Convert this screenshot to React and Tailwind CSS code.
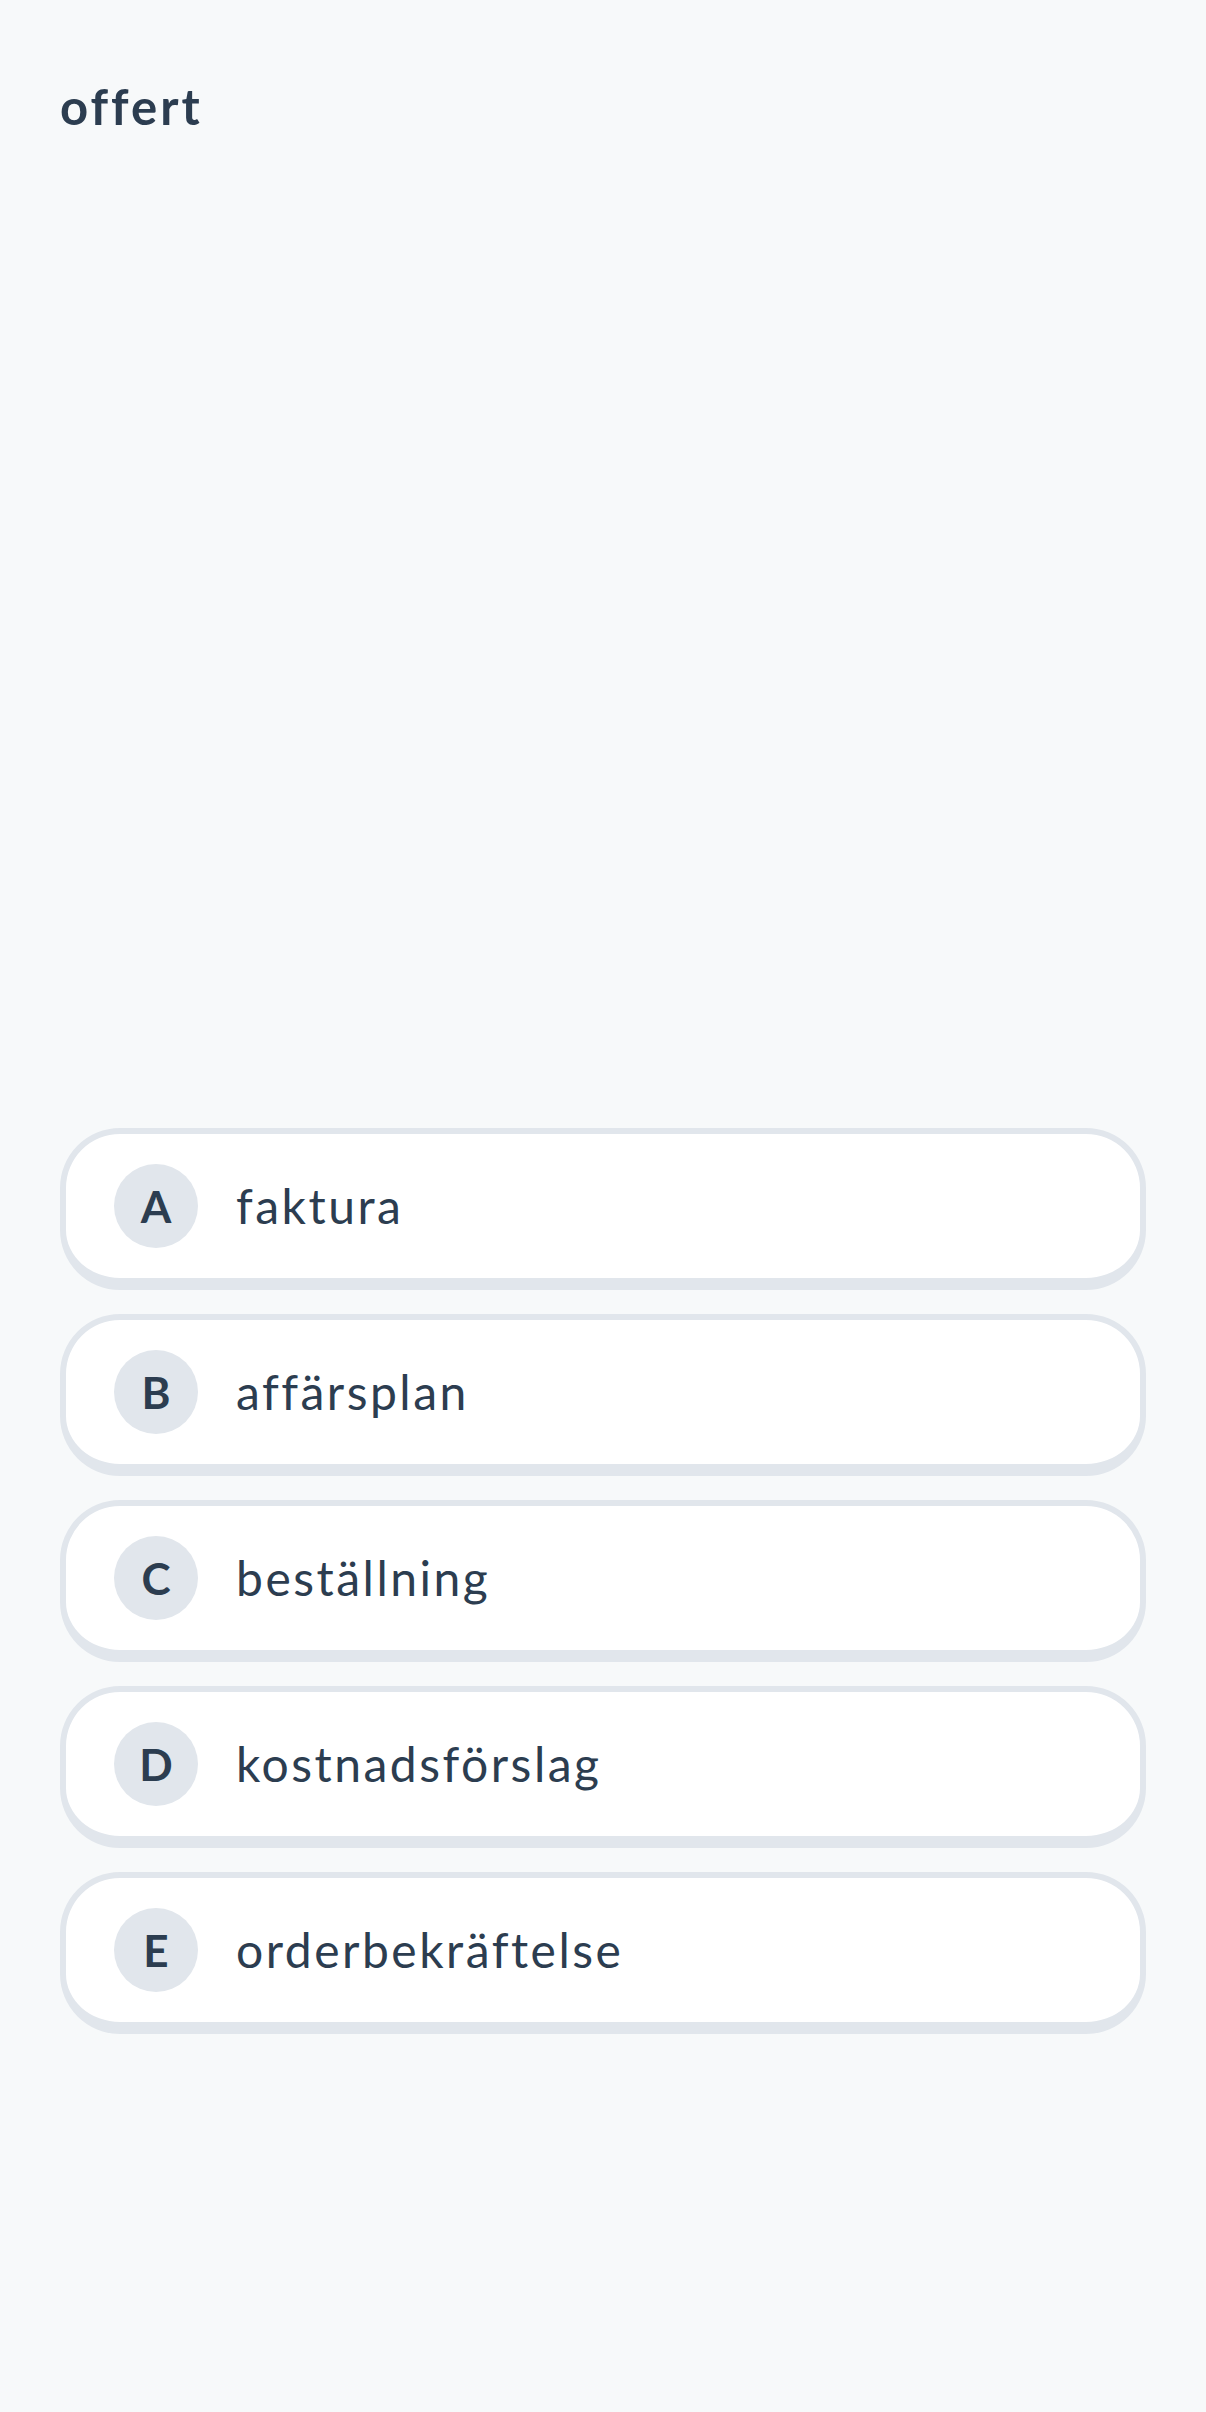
import { useState } from "react";

const options = [
  { key: "A", text: "faktura" },
  { key: "B", text: "affärsplan" },
  { key: "C", text: "beställning" },
  { key: "D", text: "kostnadsförslag" },
  { key: "E", text: "orderbekräftelse" },
];

const App = () => {
  const [selected, setSelected] = useState(null);

  return (
    <div className="min-h-screen w-full bg-[#f7f9fa] font-['Lato','Noto_Sans',sans-serif] text-[#2c3d50] px-[60px]">
      <h1 className="pt-[82px] text-[49px] leading-none font-bold tracking-[3px]">
        offert
      </h1>
      <div className="mt-[997px] flex flex-col gap-[24px]">
        {options.map((opt) => (
          <button
            key={opt.key}
            onClick={() => setSelected(opt.key)}
            className={`h-[162px] w-full flex items-center gap-[38px] px-[48px] rounded-[60px] border-[6px] border-b-[12px] bg-white text-left ${
              selected === opt.key ? "border-[#9fb3c8]" : "border-[#e1e6ec]"
            }`}
          >
            <span className="w-[84px] h-[84px] shrink-0 rounded-full bg-[#e1e6ec] flex items-center justify-center text-[44px] font-bold leading-none">
              {opt.key}
            </span>
            <span className="text-[48px] leading-none tracking-[2.5px]">
              {opt.text}
            </span>
          </button>
        ))}
      </div>
    </div>
  );
};

export default App;
